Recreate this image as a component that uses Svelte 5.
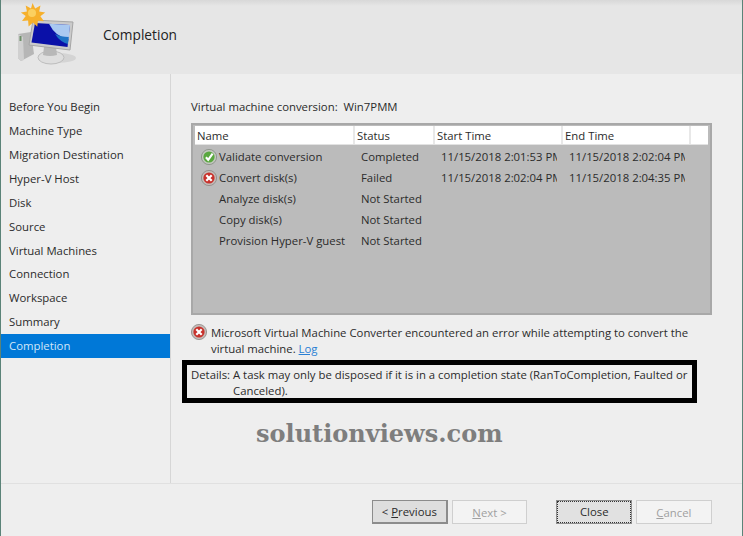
<script>
  const steps = ['Before You Begin', 'Machine Type', 'Migration Destination', 'Hyper-V Host', 'Disk', 'Source', 'Virtual Machines', 'Connection', 'Workspace', 'Summary', 'Completion'];
  const tasks = [
    { name: 'Validate conversion', status: 'Completed', start: '11/15/2018 2:01:53 PM', end: '11/15/2018 2:02:04 PM', icon: 'ok' },
    { name: 'Convert disk(s)', status: 'Failed', start: '11/15/2018 2:02:04 PM', end: '11/15/2018 2:04:35 PM', icon: 'err' },
    { name: 'Analyze disk(s)', status: 'Not Started', start: '', end: '' },
    { name: 'Copy disk(s)', status: 'Not Started', start: '', end: '' },
    { name: 'Provision Hyper-V guest', status: 'Not Started', start: '', end: '' }
  ];
</script>

{#snippet errorIcon()}
  <svg class="status-icon" viewBox="0 0 16 16">
    <circle cx="8" cy="8" r="7.6" fill="#c4bcb8" stroke="#8d8784" stroke-width="0.8" />
    <circle cx="8" cy="8" r="5.6" fill="#c8322c" />
    <path d="M5.3 5.3l5.4 5.4M10.7 5.3l-5.4 5.4" stroke="#fff" stroke-width="2.2" />
  </svg>
{/snippet}

{#snippet okIcon()}
  <svg class="status-icon" viewBox="0 0 16 16">
    <circle cx="8" cy="8" r="7.6" fill="#c2c8be" stroke="#858c82" stroke-width="0.8" />
    <circle cx="8" cy="8" r="5.6" fill="#5aa83f" />
    <path d="M4.9 8.2l2.3 2.6 4.4-6.2" fill="none" stroke="#fff" stroke-width="2.1" />
  </svg>
{/snippet}

<div class="window">
  <header class="header">
    <svg class="logo" width="78" height="70" viewBox="0 0 78 70">
      <ellipse cx="56" cy="58" rx="19" ry="5" fill="#d4d4d4" />
      <path d="M17 34l13-2 3 22-13 7-3-3z" fill="#b6b6b6" />
      <path d="M17 34l5 3 1 23-3 1-3-3z" fill="#d0d0d0" />
      <rect x="18.5" y="36" width="2" height="5" fill="#6f8f6a" />
      <ellipse cx="50" cy="57.5" rx="13" ry="6.5" fill="#dedede" stroke="#bdbdbd" />
      <path d="M43 47h12l1 8q-7 2-14 0z" fill="#b8b8b8" />
      <path d="M32 20l40 2-3 28-41-5z" fill="#cbcbcb" stroke="#a6a6a6" />
      <path d="M34 23l35 2-2.500 22-36-4.500z" fill="#0a10a8" />
      <path d="M48 23.800l21 1.200-1.300 14q-13-1.500-19.700-15.200z" fill="#a9c9f1" />
      <path d="M54 34q6 3 13.700 3l-.7 7q-8-2-13-10z" fill="#1f74c6" />
      <path d="M31.500 3l2.700 5.600 5.300-3-1.300 6 6 1-4.800 3.700 3.600 5-6.100-.6-.6 6-4.300-4.300-4.400 4.200-.5-6-6.100.5 3.700-5-4.800-3.700 6-1-1.200-6 5.300 3z" fill="#f6b02c" />
      <circle cx="31" cy="13" r="4" fill="#fbd060" />
    </svg>
    <h1 class="title">Completion</h1>
  </header>

  <div class="body">
    <nav class="sidebar">
      {#each steps as step}
        <div class="step" class:active={step === 'Completion'}>{step}</div>
      {/each}
    </nav>

    <main class="content">
      <p class="heading">Virtual machine conversion:&nbsp; Win7PMM</p>

      <div class="table">
        <div class="row head">
          <span class="cell name">Name</span>
          <span class="cell status">Status</span>
          <span class="cell start">Start Time</span>
          <span class="cell end">End Time</span>
          <span class="cell filler"></span>
        </div>
        <div class="rows">
          {#each tasks as task}
            <div class="row task">
              <span class="cell name">
                {#if task.icon === 'ok'}{@render okIcon()}{:else if task.icon === 'err'}{@render errorIcon()}{/if}
                <span class="task-name">{task.name}</span>
              </span>
              <span class="cell status">{task.status}</span>
              <span class="cell start">{task.start}</span>
              <span class="cell end">{task.end}</span>
            </div>
          {/each}
        </div>
      </div>

      <div class="message">
        {@render errorIcon()}
        <p>Microsoft Virtual Machine Converter encountered an error while attempting to convert the virtual machine. <a href="#log">Log</a></p>
      </div>

      <div class="details">
        <span class="details-label">Details:</span>
        <p>A task may only be disposed if it is in a completion state (RanToCompletion, Faulted or Canceled).</p>
      </div>

      <div class="watermark">solutionviews.com</div>
    </main>
  </div>

  <footer class="footer">
    <button class="btn pressed">&lt; <u>P</u>revious</button>
    <button class="btn" disabled><u>N</u>ext &gt;</button>
    <button class="btn default"><span>Close</span></button>
    <button class="btn" disabled><u>C</u>ancel</button>
  </footer>
</div>

<style>
  :global(body) {
    margin: 0;
    background: #eeeeee;
  }

  .window {
    width: 743px;
    height: 536px;
    box-sizing: border-box;
    display: flex;
    flex-direction: column;
    background: #eeeeee;
    border-left: 1px solid #5b8378;
    border-right: 1px solid #5b8378;
    font-family: "Open Sans", "Noto Sans", sans-serif;
    font-size: 11.35px;
    color: #2b2b2b;
    overflow: hidden;
  }

  .header {
    height: 74px;
    flex: none;
    display: flex;
    align-items: center;
    background: linear-gradient(#d8d8d8 0, #e6e6e6 6px);
  }

  .logo {
    flex: none;
    align-self: flex-start;
  }

  .title {
    margin: 0 0 6px 24px;
    font-size: 13.7px;
    font-weight: 400;
    color: #222;
  }

  .body {
    flex: 1;
    display: flex;
    min-height: 0;
  }

  .sidebar {
    width: 169px;
    flex: none;
    box-sizing: border-box;
    padding-top: 21.25px;
  }

  .step {
    height: 23.9px;
    line-height: 23.9px;
    padding-left: 8px;
  }

  .step.active {
    background: #0078d7;
    color: #d3e7f8;
  }

  .content {
    flex: 1;
    position: relative;
    border-left: 1px solid #d6d6d6;
    padding: 25px 30px 0 20px;
    min-width: 0;
  }

  .heading {
    margin: 0 0 8px;
    line-height: 16px;
  }

  .table {
    height: 192px;
    box-sizing: border-box;
    background: #bbbbbb;
    border: 2px solid #a8a8a8;
    padding: 1px 2px 0;
  }

  .row {
    display: flex;
  }

  .head {
    height: 19px;
    box-sizing: border-box;
    background: #fff;
    line-height: 19px;
    border-bottom: 1px solid #e2e2e2;
  }

  .head .cell {
    border-right: 2px solid #e8e8e8;
    padding-left: 2px;
    box-sizing: border-box;
  }

  .rows {
    padding-top: 1px;
  }

  .task {
    height: 21px;
    line-height: 21px;
  }

  .cell {
    flex: none;
    overflow: hidden;
    white-space: nowrap;
  }

  .name { width: 160px; }
  .status { width: 80px; }
  .start { width: 128px; }
  .end { width: 128px; }
  .filler { width: 17px; border-right: 0 !important; }

  .task .name {
    display: flex;
    align-items: center;
  }

  .task .status { margin-left: 6px; width: 74px; }
  .task .start { margin: 0 6px; width: 116px; }
  .task .end { margin-left: 6px; width: 116px; }

  .task-name {
    margin-left: 24px;
  }

  .task .name .status-icon {
    margin: 0 -22px 0 6px;
  }

  .status-icon {
    width: 16px;
    height: 16px;
    flex: none;
    display: block;
  }

  .message {
    display: flex;
    gap: 4px;
    margin-top: 10px;
    line-height: 16px;
  }

  .message > .status-icon {
    margin-top: -1px;
  }

  .message p {
    margin: 0;
  }

  .message a {
    color: #2a7fd4;
  }

  .details {
    display: flex;
    box-sizing: border-box;
    width: 515px;
    height: 43px;
    margin: 3px 0 0 -9px;
    border: 5px solid #000;
    padding: 2px 0 0 4px;
    line-height: 16px;
  }

  .details-label {
    flex: none;
    width: 42px;
  }

  .details p {
    margin: 0;
  }

  .watermark {
    margin: 17px 0 0 65px;
    font-family: "DejaVu Serif", serif;
    font-weight: 700;
    font-size: 24px;
    color: #7e7e7e;
    line-height: 28px;
    white-space: nowrap;
  }

  .footer {
    height: 53px;
    flex: none;
    box-sizing: border-box;
    border-top: 1px solid #e0e0e0;
    display: flex;
    align-items: flex-start;
    padding: 16px 0 0 371px;
    gap: 4px;
  }

  .btn {
    width: 75.7px;
    height: 24px;
    padding: 0;
    box-sizing: border-box;
    font: inherit;
    border: 1px solid #adadad;
    background: #e1e1e1;
    color: #2b2b2b;
  }

  .btn.pressed {
    border: 1px solid #8c8c8c;
    border-width: 1px 2px 2px 1px;
    background: #dedede;
  }

  .btn:disabled {
    background: #f3f3f3;
    border-color: #cfcfcf;
    color: #a0a0a0;
  }

  .btn.default {
    margin-left: 25px;
    border: 1px solid #8f8f8f;
    padding: 0;
  }

  .btn.default span {
    display: block;
    height: 100%;
    line-height: 20px;
    box-sizing: border-box;
    border: 1px dotted #333;
  }
</style>
